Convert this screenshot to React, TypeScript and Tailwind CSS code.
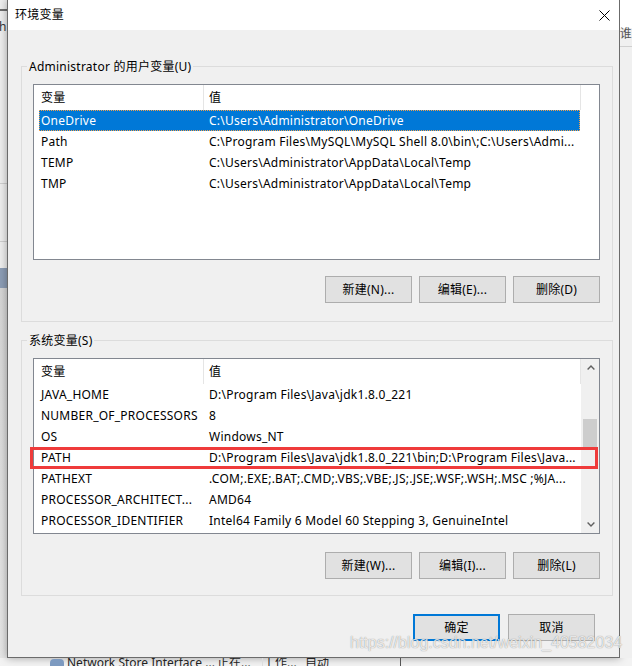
import React from "react";

const rows1: [string, string][] = [
  ["OneDrive", "C:\\Users\\Administrator\\OneDrive"],
  ["Path", "C:\\Program Files\\MySQL\\MySQL Shell 8.0\\bin\\;C:\\Users\\Admi..."],
  ["TEMP", "C:\\Users\\Administrator\\AppData\\Local\\Temp"],
  ["TMP", "C:\\Users\\Administrator\\AppData\\Local\\Temp"],
];

const rows2: [string, string][] = [
  ["JAVA_HOME", "D:\\Program Files\\Java\\jdk1.8.0_221"],
  ["NUMBER_OF_PROCESSORS", "8"],
  ["OS", "Windows_NT"],
  ["PATH", "D:\\Program Files\\Java\\jdk1.8.0_221\\bin;D:\\Program Files\\Java..."],
  ["PATHEXT", ".COM;.EXE;.BAT;.CMD;.VBS;.VBE;.JS;.JSE;.WSF;.WSH;.MSC ;%JA..."],
  ["PROCESSOR_ARCHITECT...", "AMD64"],
  ["PROCESSOR_IDENTIFIER", "Intel64 Family 6 Model 60 Stepping 3, GenuineIntel"],
];

function Chevron({ down }: { down?: boolean }) {
  return (
    <svg width="8" height="5" viewBox="0 0 8 5" className={down ? "rotate-180" : ""}>
      <path d="M0.6 4.4 L4 1 L7.4 4.4" fill="none" stroke="#606060" strokeWidth="1.4" />
    </svg>
  );
}

function Scrollbar() {
  return (
    <div className="w-[18px] bg-[#f0f0f0] flex flex-col">
      <div className="h-[17px] flex items-center justify-center pl-[1px]">
        <Chevron />
      </div>
      <div className="flex-1 pl-[2px] pt-[43px]">
        <div className="w-[14px] h-[28px] bg-[#cdcdcd]" />
      </div>
      <div className="h-[17px] flex items-center justify-center pl-[1px]">
        <Chevron down />
      </div>
    </div>
  );
}

function VarList({ rows, selected, scroll }: { rows: [string, string][]; selected?: number; scroll?: boolean }) {
  return (
    <div className="relative h-[176px] border border-[#828790] bg-white flex">
      <div className="w-[547px] flex flex-col">
        <div className="flex h-[25px]">
          <div className="w-[170px] pl-[7px] border-r border-[#e5e5e5] flex items-center">变量</div>
          <div className="w-[377px] pl-[5px] border-r border-[#e5e5e5] flex items-center">值</div>
        </div>
        {rows.map(([k, v], i) => (
          <div
            key={k}
            className={`ml-[5px] w-[541px] h-[21px] flex items-center whitespace-nowrap ${
              i === selected
                ? "bg-[#0078d7] text-white outline-1 outline-dotted outline-[#f5a04a] -outline-offset-1"
                : "text-black"
            }`}
          >
            <div className="w-[165px] pl-[2px] overflow-hidden">{k}</div>
            <div className="flex-1 pl-[5px] overflow-hidden">{v}</div>
          </div>
        ))}
      </div>
      {scroll ? <Scrollbar /> : <div className="w-[18px]" />}
    </div>
  );
}

function Btn({ children, primary }: { children: React.ReactNode; primary?: boolean }) {
  return (
    <button
      className={`w-[87px] h-[27px] flex items-center justify-center bg-[#e1e1e1] text-black ${
        primary ? "border-2 border-[#0078d7]" : "border border-[#adadad]"
      }`}
    >
      {children}
    </button>
  );
}

function Group({ label, children }: { label: string; children: React.ReactNode }) {
  return (
    <div className="relative w-[592px] h-[256px] border border-[#dcdcdc]">
      <div className="absolute -top-[9px] left-[5px] px-[2px] bg-[#f0f0f0] leading-[17px]">{label}</div>
      {children}
    </div>
  );
}

export default function App() {
  return (
    <div className="relative w-[632px] h-[666px] overflow-hidden bg-[#ececec] font-['Noto_Sans','Noto_Sans_CJK_SC',sans-serif] text-[12px] tracking-[0.24px] text-black">
      <div className="flex h-[658px]">
        {/* desktop behind, left */}
        <div className="w-[7px] flex flex-col bg-[#eeeeee]">
          <div className="h-[9px]" />
          <div className="h-[2px] w-[7px] bg-[#6e6e6e]" />
          <div className="h-[9px]" />
          <div className="text-[12px] leading-[14px] text-[#333] -ml-[1px]">h</div>
          <div className="h-[150px] border-b border-[#cfcfcf]" />
          <div className="h-[58px] border-b border-[#cfcfcf]" />
          <div className="h-[26px]" />
          <div className="h-[20px] bg-[#8c9db5]" />
          <div className="flex-1 bg-gradient-to-b from-[#d6d6d6] to-[#e6e6e6]" />
        </div>

        {/* dialog */}
        <div className="w-[618px] flex flex-col border-x border-b border-[#6b6b6b] bg-[#f0f0f0] shadow-[0_0_8px_rgba(0,0,0,0.35)]">
          <div className="h-[30px] bg-white flex items-center justify-between pl-[7px] pr-[9px]">
            <span>环境变量</span>
            <svg width="11" height="11" viewBox="0 0 11 11">
              <path d="M0.5 0.5 L10.5 10.5 M10.5 0.5 L0.5 10.5" stroke="#000" strokeWidth="1" />
            </svg>
          </div>

          <div className="flex-1 flex flex-col pl-[13px]">
            <div className="mt-[36px]">
              <Group label="Administrator 的用户变量(U)">
                <div className="ml-[11px] mt-[17px] w-[567px]">
                  <VarList rows={rows1} selected={0} />
                  <div className="flex justify-end gap-[7px] mt-[16px]">
                    <Btn>新建(N)...</Btn>
                    <Btn>编辑(E)...</Btn>
                    <Btn>删除(D)</Btn>
                  </div>
                </div>
              </Group>
            </div>

            <div className="mt-[18px]">
              <Group label="系统变量(S)">
                <div className="ml-[11px] mt-[17px] w-[567px] relative">
                  <VarList rows={rows2} scroll />
                  {/* red annotation box */}
                  <div className="absolute left-[-3px] top-[89px] w-[568px] h-[22px] border-[3px] border-[#ef3b3b]" />
                  <div className="flex justify-end gap-[7px] mt-[18px]">
                    <Btn>新建(W)...</Btn>
                    <Btn>编辑(I)...</Btn>
                    <Btn>删除(L)</Btn>
                  </div>
                </div>
              </Group>
            </div>

            <div className="flex gap-[8px] mt-[18px] ml-[392px]">
              <Btn primary>确定</Btn>
              <Btn>取消</Btn>
            </div>
          </div>
        </div>

        {/* desktop behind, right */}
        <div className="flex-1 flex flex-col bg-[#f0f0f0]">
          <div className="h-[28px] bg-white" />
          <div className="text-[12px] leading-[12px] text-[#555]">谁</div>
          <div className="mt-[6px] border-t border-[#d0d0d0]" />
        </div>
      </div>

      {/* task manager list behind, bottom */}
      <div className="h-[8px] flex overflow-hidden bg-[#f3f3f3] text-[#222] tracking-normal">
        <div className="w-[50px]" />
        <div className="w-[14px] h-[12px] mt-[1px] rounded-sm bg-[#7d9ac0]" />
        <div className="-mt-[2px] ml-[3px] w-[150px] whitespace-nowrap leading-[14px]">Network Store Interface ...</div>
        <div className="-mt-[2px] w-[45px] whitespace-nowrap leading-[14px]">正在...</div>
        <div className="-mt-[2px] w-[43px] whitespace-nowrap leading-[14px] border-l border-[#ddd]">工作...</div>
        <div className="-mt-[2px] w-[95px] whitespace-nowrap leading-[14px]">自动</div>
        <div className="w-[1px] bg-[#555]" />
      </div>

      {/* watermark */}
      <div className="absolute left-[350px] top-[633px] font-['Liberation_Sans',sans-serif] text-[16px] leading-[20px] tracking-normal text-white/80 [text-shadow:0_0_1px_rgba(0,0,0,0.5)] whitespace-nowrap">
        https://blog.csdn.net/weixin_40582034
      </div>
    </div>
  );
}
